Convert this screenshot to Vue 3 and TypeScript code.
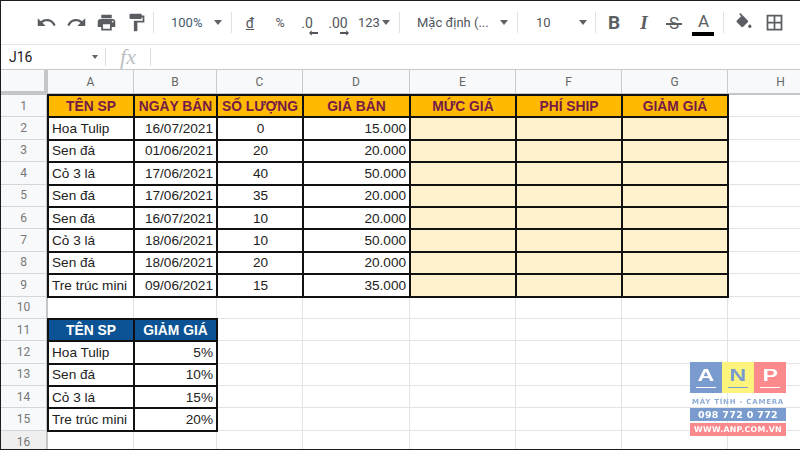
<script setup lang="ts">
interface Cell { text: string; cls: string }

const letters: string[] = ['A', 'B', 'C', 'D', 'E', 'F', 'G', 'H']

const products: string[][] = [
  ['Hoa Tulip', '16/07/2021', '0', '15.000'],
  ['Sen đá', '01/06/2021', '20', '20.000'],
  ['Cỏ 3 lá', '17/06/2021', '40', '50.000'],
  ['Sen đá', '17/06/2021', '35', '20.000'],
  ['Sen đá', '16/07/2021', '10', '20.000'],
  ['Cỏ 3 lá', '18/06/2021', '10', '50.000'],
  ['Sen đá', '18/06/2021', '20', '20.000'],
  ['Tre trúc mini', '09/06/2021', '15', '35.000'],
]
const heads: string[] = ['TÊN SP', 'NGÀY BÁN', 'SỐ LƯỢNG', 'GIÁ BÁN', 'MỨC GIÁ', 'PHÍ SHIP', 'GIẢM GIÁ']
const discounts: string[][] = [
  ['Hoa Tulip', '5%'],
  ['Sen đá', '10%'],
  ['Cỏ 3 lá', '15%'],
  ['Tre trúc mini', '20%'],
]

function blank(n: number): Cell[] {
  return Array.from({ length: n }, () => ({ text: '', cls: '' }))
}

const rows: Cell[][] = []
rows.push([...heads.map((t) => ({ text: t, cls: 'b head' })), ...blank(1)])
for (const p of products) {
  rows.push([
    { text: p[0], cls: 'b' },
    { text: p[1], cls: 'b right' },
    { text: p[2], cls: 'b center' },
    { text: p[3], cls: 'b right' },
    { text: '', cls: 'b beige' },
    { text: '', cls: 'b beige' },
    { text: '', cls: 'b beige' },
    ...blank(1),
  ])
}
rows.push(blank(8))
rows.push([
  { text: 'TÊN SP', cls: 'b blue' },
  { text: 'GIẢM GIÁ', cls: 'b blue' },
  ...blank(6),
])
for (const d of discounts) {
  rows.push([
    { text: d[0], cls: 'b' },
    { text: d[1], cls: 'b right' },
    ...blank(6),
  ])
}
rows.push(blank(8))
</script>

<template>
  <div class="app">
    <div class="toolbar">
      <span class="ic"><svg viewBox="0 0 24 24"><path d="M12.5 8c-2.65 0-5.05.99-6.9 2.6L2 7v9h9l-3.62-3.62c1.39-1.16 3.16-1.88 5.12-1.88 3.54 0 6.55 2.31 7.6 5.5l2.37-.78C21.08 11.03 17.15 8 12.5 8z" /></svg></span>
      <span class="ic"><svg viewBox="0 0 24 24"><path d="M18.4 10.6C16.55 8.99 14.15 8 11.5 8c-4.65 0-8.58 3.03-9.96 7.22L3.9 16c1.05-3.19 4.05-5.5 7.6-5.5 1.95 0 3.73.72 5.12 1.88L13 16h9V7l-3.6 3.6z" /></svg></span>
      <span class="ic"><svg viewBox="0 0 24 24"><path d="M19 8H5c-1.66 0-3 1.34-3 3v6h4v4h12v-4h4v-6c0-1.66-1.34-3-3-3zm-3 11H8v-5h8v5zm3-7c-.55 0-1-.45-1-1s.45-1 1-1 1 .45 1 1-.45 1-1 1zm-1-9H6v4h12V3z" /></svg></span>
      <span class="ic"><svg viewBox="0 0 24 24"><path d="M18 4V3c0-.55-.45-1-1-1H5c-.55 0-1 .45-1 1v4c0 .55.45 1 1 1h12c.55 0 1-.45 1-1V6h1v4H9v11c0 .55.45 1 1 1h2c.55 0 1-.45 1-1v-9h8V4h-3z" /></svg></span>
      <i class="sep s1"></i>
      <span class="drop zoom"><span>100%</span><b class="caret"></b></span>
      <i class="sep s2"></i>
      <span class="t dong">đ</span>
      <span class="t pct">%</span>
      <span class="t dec1">.0<svg class="arrow" viewBox="0 0 10 6"><path d="M0 3l3-3v2h7v2H3v2z" /></svg></span>
      <span class="t dec2">.00<svg class="arrow" viewBox="0 0 10 6"><path d="M10 3L7 0v2H0v2h7v2z" /></svg></span>
      <span class="t num">123<b class="caret small"></b></span>
      <i class="sep s3"></i>
      <span class="drop font"><span>Mặc định (...</span><b class="caret"></b></span>
      <i class="sep s4"></i>
      <span class="drop size"><span>10</span><b class="caret"></b></span>
      <i class="sep s5"></i>
      <span class="fmt bold">B</span>
      <span class="fmt ital">I</span>
      <span class="fmt strike">S</span>
      <span class="fmt color">A</span>
      <i class="sep s6"></i>
      <span class="ic fill"><svg viewBox="0 0 24 24"><path d="M16.56 8.94L7.62 0 6.21 1.41l2.38 2.38-5.15 5.15c-.59.59-.59 1.54 0 2.12l5.5 5.5c.29.29.68.44 1.06.44s.77-.15 1.06-.44l5.5-5.5c.59-.58.59-1.53 0-2.12zM19 13.5s-2 1.4-2 2.5c0 1.1.9 2 2 2s2-.9 2-2c0-1.1-2-2.5-2-2.5z" /></svg></span>
      <span class="ic borders"><svg viewBox="0 0 24 24"><path d="M3 3v18h18V3H3zm8 16H5v-6h6v6zm0-8H5V5h6v6zm8 8h-6v-6h6v6zm0-8h-6V5h6v6z" /></svg></span>
    </div>

    <div class="formula">
      <span class="ref">J16</span>
      <b class="caret tiny"></b>
      <i class="fsep"></i>
      <span class="fx">fx</span>
      <i class="fsep"></i>
    </div>

    <div class="sheet">
      <div class="corner"></div>
      <div v-for="l in letters" :key="l" class="colh">{{ l }}</div>
      <template v-for="(row, r) in rows" :key="r">
        <div class="rowh" :class="{ last: r === rows.length - 1 }">{{ r + 1 }}</div>
        <div v-for="(c, i) in row" :key="i" class="cell" :class="c.cls">{{ c.text }}</div>
      </template>
    </div>

    <div class="logo">
      <div class="tiles">
        <span class="tile ta"><span class="glyph">A</span></span>
        <span class="tile tn"><span class="glyph">N</span></span>
        <span class="tile tp"><span class="glyph">P</span></span>
      </div>
      <div class="tag">MÁY TÍNH - CAMERA</div>
      <div class="band phone">098 772 0 772</div>
      <div class="band web">WWW.ANP.COM.VN</div>
    </div>
  </div>
</template>

<style>
html, body { margin: 0; background: #fff; }
</style>

<style scoped>
.app {
  position: relative;
  box-sizing: border-box;
  width: 800px;
  height: 450px;
  overflow: hidden;
  border: 1px solid #1c1c22;
  border-right: 0;
  background: #fff;
  font-family: Roboto, "Liberation Sans", sans-serif;
}
.toolbar {
  box-sizing: border-box;
  height: 44px;
  display: flex;
  align-items: center;
  padding-left: 33px;
  border-bottom: 1px solid #e3e4e4;
  color: #5f6368;
}
.ic {
  width: 24px;
  margin-right: 6px;
  height: 24px;
  display: flex;
  align-items: center;
  justify-content: center;
}
.ic svg { width: 21px; height: 21px; fill: #5a5e62; }
.sep { width: 1px; height: 21px; background: #dfe1e3; flex: none; }
.s1 { margin-left: -1px; }
.drop { display: flex; align-items: center; font-size: 13px; color: #50565b; }
.zoom { width: 77px; box-sizing: border-box; padding: 0 9px 0 17px; justify-content: space-between; color: #44596c; }
.caret {
  display: inline-block;
  width: 0;
  height: 0;
  border: 4px solid transparent;
  border-top: 5px solid #5f6368;
  border-bottom: 0;
}
.caret.small { margin-left: 2px; }
.t { position: relative; font-size: 13.5px; color: #50565b; flex: none; text-align: center; }
.dong { width: 14px; margin-left: 11px; text-decoration: underline; font-size: 14px; }
.pct { width: 14px; margin-left: 16px; font-size: 12.5px; }
.dec1 { width: 16px; margin-left: 12px; font-size: 14px; }
.dec2 { width: 22px; margin-left: 12px; font-size: 14px; }
.arrow { position: absolute; left: 10px; top: 15px; width: 9px; height: 6px; fill: #50565b; }
.dec2 .arrow { left: 13px; }
.num { margin-left: 9px; width: 33px; display: flex; align-items: center; font-size: 13px; }
.s3 { margin-left: 8px; }
.font { width: 117px; box-sizing: border-box; padding: 0 9px 0 17px; justify-content: space-between; }
.size { width: 77px; box-sizing: border-box; padding: 0 8px 0 18px; justify-content: space-between; }
.fmt { width: 30px; flex: none; text-align: center; color: #5a5e62; font-size: 17px; line-height: 24px; position: relative; }
.s5 + .fmt { margin-left: 3px; }
.bold { font-weight: 700; font-size: 19px; }
.ital { font-family: "Liberation Serif", serif; font-style: italic; font-weight: 700; font-size: 19px; }
.strike::after { content: ""; position: absolute; left: 7px; right: 7px; top: 12px; height: 2px; background: #5a5e62; }
.color { font-size: 17px; line-height: 20px; padding-bottom: 4px; height: 20px; width: 29px; }
.color::after { content: ""; position: absolute; left: 3px; right: 4px; top: 21px; height: 4px; background: #000; }
.s6 { margin-left: 5px; }
.fill { margin-left: 8px; }
.fill svg { width: 20px; height: 20px; }
.formula {
  box-sizing: border-box;
  height: 25px;
  display: flex;
  align-items: center;
  border-bottom: 1px solid #c8cacb;
}
.ref { width: 91px; padding-left: 8px; box-sizing: border-box; font-size: 14px; color: #222; }
.caret.tiny { border-width: 3.5px; border-top-width: 4px; margin-right: 7px; }
.fsep { width: 1px; height: 18px; background: #dadce0; flex: none; }
.fx {
  width: 44px;
  text-align: center;
  font-family: "Liberation Serif", serif;
  font-style: italic;
  font-size: 22px;
  color: #bcbfc2;
}
.sheet {
  display: grid;
  grid-template-columns: 47px 86px 83px 86px 107px 106px 106px 106px 106px;
  grid-template-rows: 25px repeat(16, 22.4px);
}
.corner {
  box-sizing: border-box;
  background: #f8f9fa;
  border-right: 4px solid #c4c6c8;
  border-bottom: 4px solid #c4c6c8;
}
.colh {
  box-sizing: border-box;
  background: #f8f9fa;
  border-right: 1px solid #c8cacc;
  border-bottom: 2px solid #c4c6c8;
  display: flex;
  align-items: center;
  justify-content: center;
  font-size: 12px;
  color: #666;
}
.rowh {
  box-sizing: border-box;
  background: #f8f9fa;
  border-right: 2px solid #c4c6c8;
  border-bottom: 1px solid #d4d5d6;
  display: flex;
  align-items: center;
  justify-content: center;
  font-size: 12px;
  color: #777;
}
.rowh.last { background: #efefef; }
.cell {
  box-sizing: border-box;
  border-right: 1px solid #e2e3e3;
  border-bottom: 1px solid #e2e3e3;
  padding: 0 3px 0 4px;
  display: flex;
  align-items: center;
  font-family: "Liberation Sans", Arial, sans-serif;
  font-size: 13.6px;
  color: #222;
  white-space: nowrap;
}
.b { outline: 2px solid #111; outline-offset: -1px; z-index: 1; border: 0; }
.right { justify-content: flex-end; padding-right: 4px; }
.center { justify-content: center; }
.head { background: #ffb900; color: #741b47; font-weight: 700; font-size: 13.8px; justify-content: center; padding: 0; }
.blue { background: #0b5394; color: #fff; font-weight: 700; font-size: 13.8px; justify-content: center; padding: 0; }
.beige { background: #fff2cc; }
.logo {
  position: absolute;
  left: 689px;
  top: 361px;
  width: 96px;
  z-index: 2;
  font-family: "DejaVu Sans", sans-serif;
  filter: blur(.3px);
}
.tiles { display: grid; grid-template-columns: repeat(3, 1fr); height: 31px; }
.tile {
  display: flex;
  align-items: center;
  justify-content: center;
  padding-bottom: 3px;
  box-sizing: border-box;
  position: relative;
  color: #fff;
}
.glyph { font-family: "Liberation Sans", sans-serif; font-size: 16px; font-weight: 700; transform: scaleX(1.45); }
.tile::after { content: ""; position: absolute; left: 6px; right: 6px; bottom: 5px; height: 1px; background: currentColor; }
.ta { background: #7a9bcd; }
.tn { background: #fdf47d; color: #7a9bcd; }
.tp { background: #fb8a8d; }
.tag { height: 15px; font-size: 7px; font-weight: 700; color: #8fadd6; display: flex; align-items: center; justify-content: center; white-space: nowrap; letter-spacing: .75px; padding-top: 2px; box-sizing: border-box; }
.band { display: flex; align-items: center; justify-content: center; color: #fff; font-weight: 700; white-space: nowrap; }
.phone { height: 13px; background: #7a9bcd; font-size: 9.5px; letter-spacing: .3px; margin-bottom: 2px; }
.web { height: 13px; background: #fb8a8d; font-size: 7.8px; letter-spacing: .3px; }
</style>
